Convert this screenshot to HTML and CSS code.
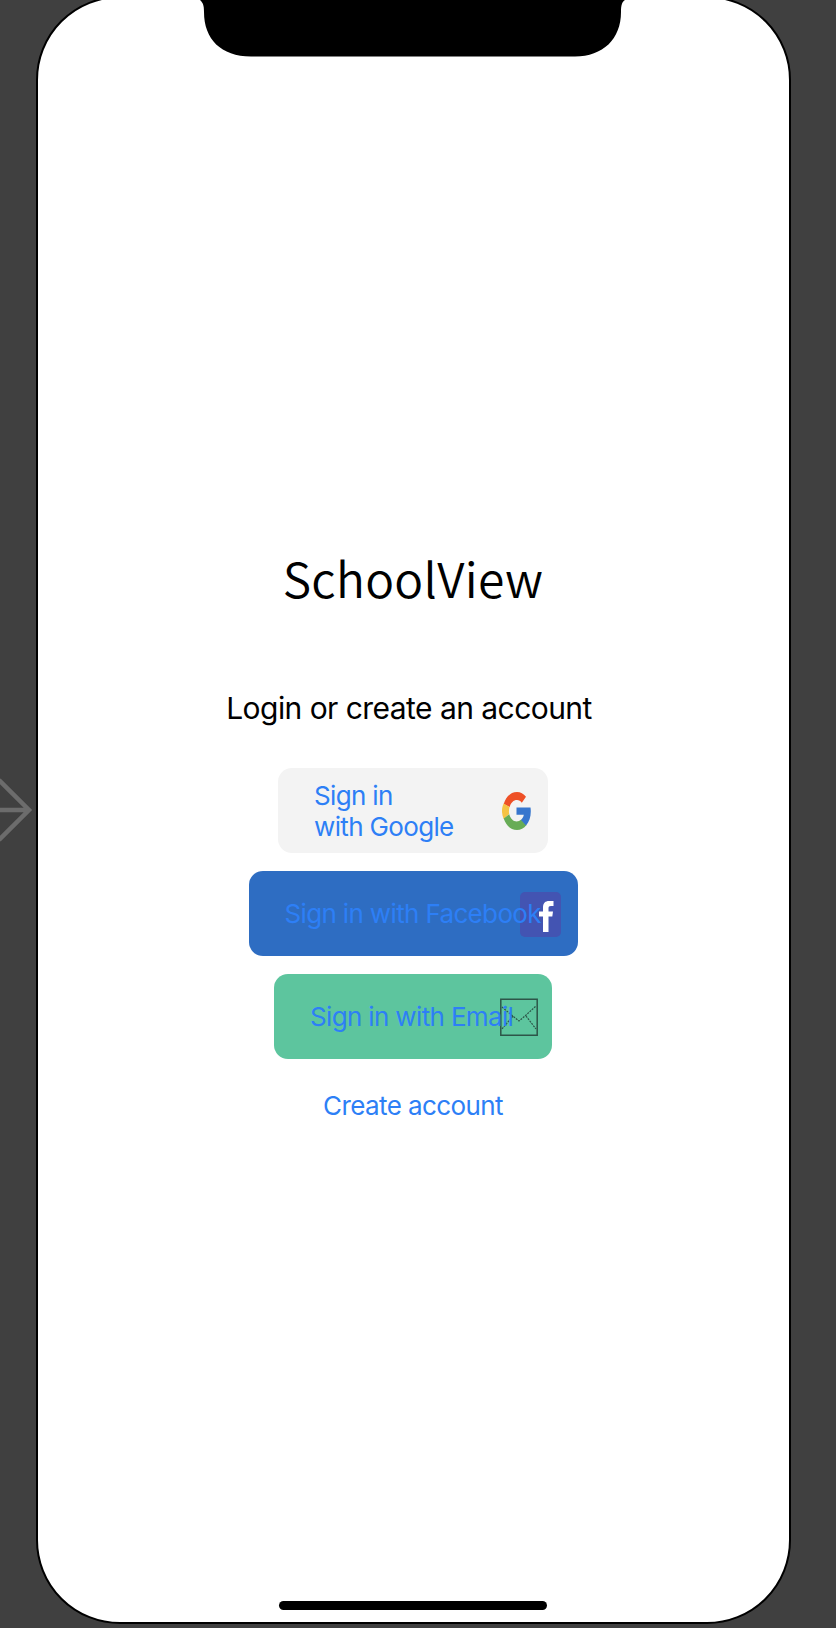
FILE: index.html
```html
<!DOCTYPE html>
<html lang="en">
<head>
<meta charset="utf-8">
<title>SchoolView</title>
<link rel="stylesheet" href="styles.css">
</head>
<body>
<main class="canvas">
  <svg class="entry-arrow" viewBox="0 0 34 64" aria-hidden="true"><path d="M-2 32H29M-1 2L29 32L-1 62"/></svg>
  <section class="phone">
    <svg class="notch" viewBox="0 0 426 57" aria-hidden="true"><path d="M0 0C3 3 4 5 4 12C4 39 21 56.5 51 56.5H375C403 56.5 421 39 421 12C421 5 422 2 425 0Z"/></svg>
    <h1 class="title">SchoolView</h1>
    <p class="subtitle">Login or create an account</p>
    <div class="actions">
      <button class="btn google"><span class="label">Sign in<br>with Google</span>
        <svg class="icon" viewBox="0 0 29 38" preserveAspectRatio="none"><path fill="#ee5026" d="M1.7 12C4 5 8.5 0 15 0c3.500 0 6.500 1.800 9 4.700l-4.200 6C18.500 9 17 8 15 8c-3.500 0-6.200 2.700-7.300 7z"/><path fill="#f5c344" d="M1.700 11.500C-.6 16-.6 22 1.700 27l5.500-5c-.5-2-.3-4.800.3-7z"/><path fill="#67ac56" d="M1.700 26.500C4 33 8.500 38 15 38c3.500 0 7-1.800 9.500-5l-5.200-5.500c-4.500 4-10.300 1.500-12-5.300z"/><path fill="#3776ce" d="M14.500 15.500h14C29.500 22 28 29 24 33.500l-5-5.500c1.500-1.500 2.500-3 2.800-5.200h-7.300z"/></svg>
      </button>
      <button class="btn facebook"><span class="label">Sign in with Facebook</span>
        <svg class="icon" viewBox="0 0 41 45"><rect width="41" height="45" rx="5" fill="#4354b2"/><path fill="#fff" d="M23 40V24.500h-4v-5h4v-4C23 11 25.500 9 29 9h4.500v5H31c-2 0-2.500.8-2.500 2.300v3.200h4.500l-.7 5h-3.800V40z"/></svg>
      </button>
      <button class="btn email"><span class="label">Sign in with Email</span>
        <svg class="icon" viewBox="0 0 38 38"><path class="frame" d="M.8 1.200H37.200V37.200H.8z"/><path class="flap" d="M2 9L14 19L19 23L25 18L36 8M13 18L2 31M26 18L36 31"/></svg>
      </button>
    </div>
    <a class="create">Create account</a>
    <div class="home-bar"></div>
  </section>
</main>
</body>
</html>
```
FILE: styles.css
```css
* { box-sizing: border-box; }
body { margin: 0; background: #404040; }
.canvas {
  position: relative;
  height: 1628px;
  overflow: hidden;
  padding-left: 36px;
  font-family: Inter, "Liberation Sans", sans-serif;
}
.entry-arrow {
  position: absolute;
  left: 0;
  top: 778px;
  width: 34px;
  height: 64px;
  fill: none;
  stroke: #6c6c6c;
  stroke-width: 4.500;
}
.phone {
  position: relative;
  display: flex;
  flex-direction: column;
  align-items: center;
  width: 755px;
  height: 1628px;
  margin-top: -4px;
  padding-right: 1px;
  border: 2px solid #000;
  border-radius: 84px;
  background: #fff;
  white-space: nowrap;
}
.notch {
  position: absolute;
  top: 2px;
  left: 162px;
  width: 426px;
  height: 57px;
}
.title {
  margin: 544px 0 0;
  font: 350 48px/70px "Noto Sans CJK SC", "Noto Sans", sans-serif;
  letter-spacing: 0.3px;
}
.subtitle {
  margin: 78px 8px 0 0;
  font-size: 30px;
  line-height: 36px;
  letter-spacing: -0.55px;
}
.actions {
  display: flex;
  flex-direction: column;
  align-items: center;
  gap: 18px;
  margin-top: 42px;
}
.btn {
  display: flex;
  position: relative;
  align-items: center;
  height: 85px;
  padding: 0 0 0 36px;
  border: 0;
  border-radius: 14px;
  color: #2d7ff6;
  font: 400 26px/31px Inter, sans-serif;
  letter-spacing: -0.65px;
  text-align: left;
}
.label { position: relative; z-index: 1; }
.icon { position: absolute; }
.google { width: 270px; background: #f3f3f3; }
.google .icon { left: 224px; top: 24px; width: 29px; height: 38px; }
.facebook { width: 329px; background: #2e6dc2; }
.facebook .icon { left: 271px; top: 21px; width: 41px; height: 45px; }
.email { width: 278px; background: #5dc59e; }
.email .icon { left: 226px; top: 24px; width: 38px; height: 38px; fill: none; stroke: #2d5548; }
.frame { stroke-width: 1.500; }
.flap { stroke-width: 1.200; stroke-dasharray: 2 1; }
.create {
  margin-top: 31px;
  color: #2d7ff6;
  font-size: 26px;
  line-height: 31px;
  letter-spacing: -0.6px;
}
.home-bar {
  width: 268px;
  height: 9px;
  margin-top: auto;
  margin-bottom: 12px;
  border-radius: 5px;
  background: #000;
}
```
